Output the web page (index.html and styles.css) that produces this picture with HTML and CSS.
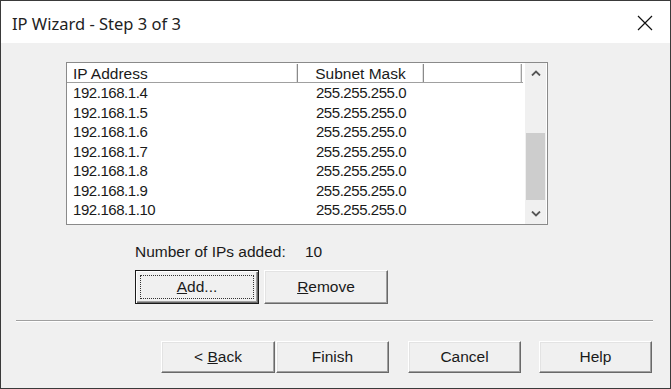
FILE: index.html
```html
<!DOCTYPE html>
<html>
<head>
<meta charset="utf-8">
<link rel="stylesheet" href="styles.css">
</head>
<body>
<div class="window">
  <div class="titlebar">
    <span class="title">IP Wizard - Step 3 of 3</span>
    <svg class="close" width="16" height="16" viewBox="0 0 16 16"><path d="M1 1 L15 15 M15 1 L1 15" stroke="#111" stroke-width="1.2" fill="none"/></svg>
  </div>
  <div class="content">
    <div class="listbox">
      <div class="listmain">
        <div class="hdr">
          <div class="hcell c1">IP Address</div>
          <div class="hcell c2">Subnet Mask</div>
          <div class="hcell c3"></div>
        </div>
        <div class="row"><span class="c1">192.168.1.4</span><span class="c2">255.255.255.0</span></div>
        <div class="row"><span class="c1">192.168.1.5</span><span class="c2">255.255.255.0</span></div>
        <div class="row"><span class="c1">192.168.1.6</span><span class="c2">255.255.255.0</span></div>
        <div class="row"><span class="c1">192.168.1.7</span><span class="c2">255.255.255.0</span></div>
        <div class="row"><span class="c1">192.168.1.8</span><span class="c2">255.255.255.0</span></div>
        <div class="row"><span class="c1">192.168.1.9</span><span class="c2">255.255.255.0</span></div>
        <div class="row"><span class="c1">192.168.1.10</span><span class="c2">255.255.255.0</span></div>
      </div>
      <div class="scrollbar">
        <div class="arrow"><svg width="10" height="6" viewBox="0 0 10 6"><path d="M1 5.5 L5 1.5 L9 5.5" stroke="#555" stroke-width="1.8" fill="none"/></svg></div>
        <div class="track"><div class="thumb"></div></div>
        <div class="arrow"><svg width="10" height="6" viewBox="0 0 10 6"><path d="M1 0.5 L5 4.5 L9 0.5" stroke="#555" stroke-width="1.8" fill="none"/></svg></div>
      </div>
    </div>
    <div class="count"><span class="countlabel">Number of IPs added:</span><span>10</span></div>
    <div class="editbtns">
      <div class="btn default"><span class="focus"><u>A</u>dd...</span></div>
      <div class="btn"><span><u>R</u>emove</span></div>
    </div>
    <div class="sep"></div>
    <div class="navbtns">
      <div class="btn nav">&lt;&nbsp;<u>B</u>ack</div>
      <div class="btn nav finish">Finish</div>
      <div class="btn nav cancel">Cancel</div>
      <div class="btn nav help">Help</div>
    </div>
  </div>
</div>
</body>
</html>
```

FILE: styles.css
```css
html, body {
  margin: 0;
  padding: 0;
}
body {
  width: 671px;
  height: 389px;
  overflow: hidden;
  font-family: "Liberation Sans", Arial, sans-serif;
  font-size: 15.5px;
  color: #1a1a1a;
}
.window {
  width: 671px;
  height: 389px;
  box-sizing: border-box;
  border: 1px solid #3a3a3a;
  background: #f0f0f0;
  display: flex;
  flex-direction: column;
}
.titlebar {
  height: 42px;
  background: #fff;
  display: flex;
  align-items: center;
  justify-content: space-between;
  padding: 0 17px 0 11px;
  flex: none;
}
.title {
  font-family: "Noto Sans", "Open Sans", sans-serif;
  font-size: 16.5px;
  color: #222;
  margin-top: 2px;
}
.close {
  margin-top: 2px;
}
.content {
  flex: 1;
  display: flex;
  flex-direction: column;
  padding-top: 19px;
}
.listbox {
  margin-left: 65px;
  width: 482px;
  height: 163px;
  box-sizing: border-box;
  border: 1px solid #8a8a8a;
  background: #fff;
  display: flex;
}
.listmain {
  flex: 1;
  display: flex;
  flex-direction: column;
}
.hdr {
  height: 20px;
  display: flex;
  box-sizing: border-box;
  border-bottom: 1px solid #a0a0a0;
  border-top: 1px solid #fff;
}
.hcell {
  box-sizing: border-box;
  line-height: 19px;
  border-right: 1px solid #8a8a8a;
  box-shadow: inset -1px 0 #e0e0e0;
}
.hdr .c1 {
  width: 231px;
  padding-left: 5px;
  border-left: 1px solid #fff;
}
.hdr .c2 {
  width: 126px;
  text-align: center;
}
.hdr .c3 {
  width: 98px;
  border-right: 1px solid #a0a0a0;
}
.row {
  height: 19.5px;
  line-height: 19.5px;
  display: flex;
  font-size: 15px;
  letter-spacing: -0.45px;
}
.row .c1 {
  width: 231px;
  padding-left: 6px;
  box-sizing: border-box;
}
.row .c2 {
  width: 126px;
  text-align: center;
}
.scrollbar {
  width: 21px;
  background: #f0f0f0;
  display: flex;
  flex-direction: column;
  margin: 0 1px 0 2px;
}
.arrow {
  height: 20px;
  display: flex;
  align-items: center;
  justify-content: center;
}
.track {
  flex: 1;
  padding-top: 50px;
}
.thumb {
  height: 67px;
  margin: 0 1px;
  background: #cdcdcd;
}
.count {
  margin: 19px 0 0 134px;
  height: 16px;
  line-height: 16px;
  display: flex;
}
.countlabel {
  width: 170px;
}
.editbtns {
  margin: 10px 0 0 134px;
  display: flex;
  gap: 5px;
}
.btn {
  box-sizing: border-box;
  background: #f0f0f0;
  border: 1px solid;
  border-color: #fff #696969 #696969 #fff;
  box-shadow: inset -1px -1px #a0a0a0, inset 1px 1px #e3e3e3;
  display: flex;
  align-items: center;
  justify-content: center;
  color: #1a1a1a;
}
.editbtns .btn {
  width: 124px;
  height: 34px;
}
.btn.default {
  border: 1px solid #1a1a1a;
  box-shadow: inset 1px 1px #fff, inset -1px -1px #696969, inset -2px -2px #a0a0a0;
  padding: 4px;
}
.focus {
  flex: 1;
  align-self: stretch;
  border: 1px dotted #333;
  display: flex;
  align-items: center;
  justify-content: center;
}
.sep {
  margin: 16px 0 0 15px;
  width: 637px;
  height: 1px;
  background: #a0a0a0;
  border-bottom: 1px solid #fff;
}
.navbtns {
  margin: 19px 0 0 160px;
  display: flex;
}
.btn.nav {
  width: 114px;
  height: 32px;
}
.btn.finish {
  margin-left: 1px;
  width: 113px;
}
.btn.cancel {
  margin-left: 19px;
  width: 113px;
}
.btn.help {
  margin-left: 18px;
  width: 113px;
}
```
